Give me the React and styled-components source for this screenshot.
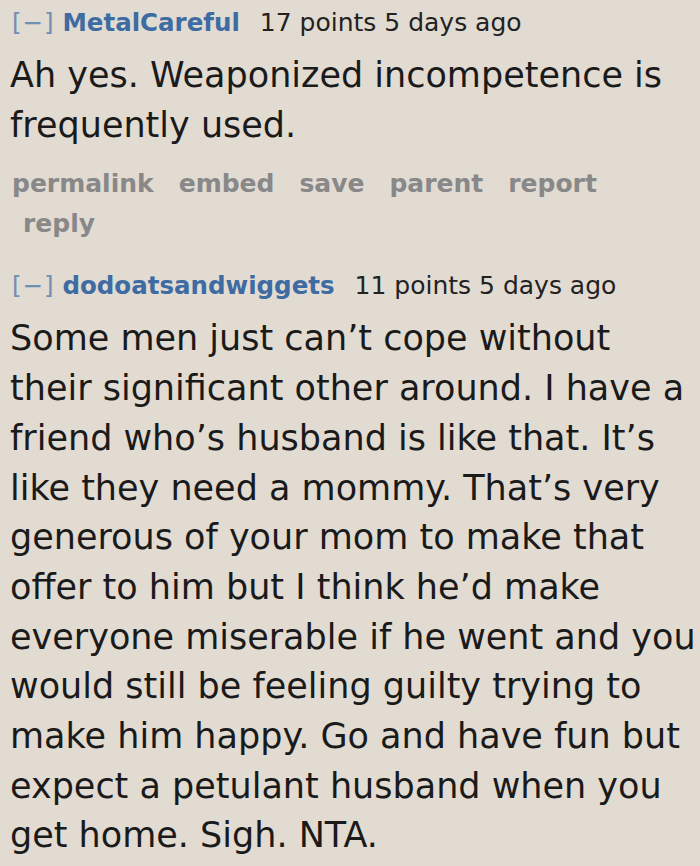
import styled, { createGlobalStyle } from "styled-components";

const GlobalStyle = createGlobalStyle`
	html, body {
		margin: 0;
		padding: 0;
		background: #e2dbd2;
	}
	body {
		font-family: "DejaVu Sans", Verdana, sans-serif;
		color: #1c1c1c;
	}
`;

// lines kept as in the screenshot so the wrapping matches
const comments = [
	{
		id: 1,
		author: "MetalCareful",
		points: 17,
		age: "5 days ago",
		lines: ["Ah yes. Weaponized incompetence is", "frequently used."],
		buttons: ["permalink", "embed", "save", "parent", "report", "reply"],
	},
	{
		id: 2,
		author: "dodoatsandwiggets",
		points: 11,
		age: "5 days ago",
		lines: [
			"Some men just can\u2019t cope without",
			"their significant other around. I have a",
			"friend who\u2019s husband is like that. It\u2019s",
			"like they need a mommy. That\u2019s very",
			"generous of your mom to make that",
			"offer to him but I think he\u2019d make",
			"everyone miserable if he went and you",
			"would still be feeling guilty trying to",
			"make him happy. Go and have fun but",
			"expect a petulant husband when you",
			"get home. Sigh. NTA.",
		],
		buttons: [],
	},
];

const App = () => {
	return (
		<>
			<GlobalStyle />
			<Page>
				{comments.map((c) => (
					<Comment key={c.id}>
						<Tagline>
							<Expand>[&minus;]</Expand> <Author>{c.author}</Author>
							<Score>
								{c.points} points {c.age}
							</Score>
						</Tagline>
						<Body>
							{c.lines.map((line, i) => (
								<Line key={i}>{line}</Line>
							))}
						</Body>
						{c.buttons.length > 0 && (
							<Buttons>
								{c.buttons.map((b) => (
									<li key={b}>
										<a href="#">{b}</a>
									</li>
								))}
							</Buttons>
						)}
					</Comment>
				))}
			</Page>
		</>
	);
};

const Page = styled.div`
	padding: 5px 0 0 0;
	width: 700px;
`;

const Comment = styled.div`
	margin-bottom: 24px;
`;

const Tagline = styled.p`
	margin: 0;
	padding-left: 12px;
	font-size: 24.5px;
	line-height: 36px;
	white-space: nowrap;
`;

const Expand = styled.span`
	color: #6f8fb4;
	letter-spacing: 1px;
`;

const Author = styled.span`
	color: #3e6ca2;
	font-weight: bold;
`;

const Score = styled.span`
	color: #222;
	font-size: 25px;
	margin-left: 20px;
`;

const Body = styled.div`
	margin-top: 10px;
	padding: 0 2px 0 10px;
	font-size: 35px;
	line-height: 49.7px;
	color: #1a1a1a;
`;

const Line = styled.span`
	display: block;
	white-space: nowrap;
`;

const Buttons = styled.ul`
	list-style: none;
	margin: 14px 0 0 12px;
	padding: 0;
	width: 640px;
	font-size: 25px;
	line-height: 40px;

	li {
		display: inline-block;
		padding: 0 14px 0 11px;
		&:first-child {
			padding-left: 0;
		}
	}

	a {
		color: #888;
		font-weight: bold;
		text-decoration: none;
	}
`;

export default App;
